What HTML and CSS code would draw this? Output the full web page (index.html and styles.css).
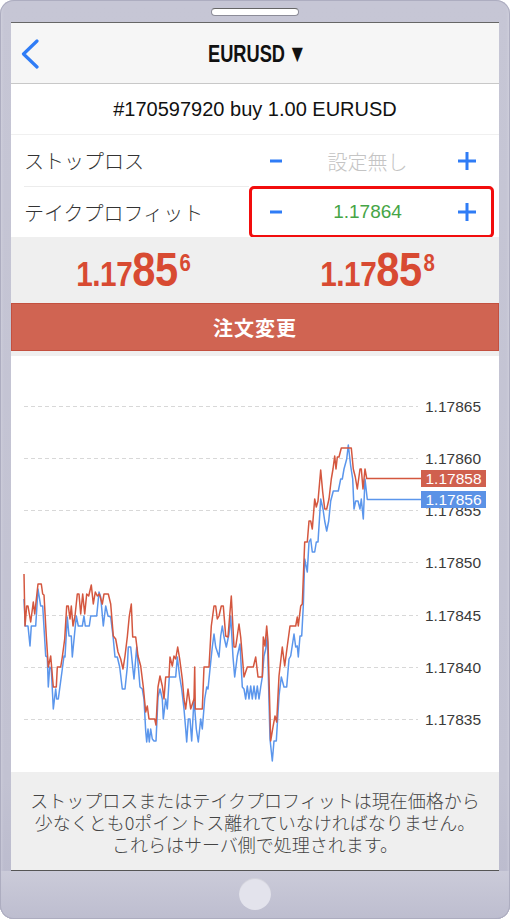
FILE: index.html
```html
<!DOCTYPE html>
<html lang="ja">
<head>
    <meta charset="UTF-8">
    <title>EURUSD 注文変更</title>
    <link rel="stylesheet" href="styles.css">
</head>
<body>

<div class="phone">
    <div class="phone-top">
        <div class="speaker"></div>
    </div>

    <div class="screen">
        <div class="nav">
            <div class="nav-back">
                <svg width="20" height="30" viewBox="0 0 20 30">
                    <polyline points="17,2 3.5,15 17,28" fill="none" stroke="#2f7cf6" stroke-width="3.2" stroke-linecap="round" stroke-linejoin="round"/>
                </svg>
            </div>
            <div class="nav-title">EURUSD<span class="caret">&#9660;</span></div>
            <div></div>
        </div>

        <div class="order-info">#170597920 buy 1.00 EURUSD</div>

        <div class="row row-first">
            <div class="row-label">ストップロス</div>
            <div class="stepper">
                <svg class="btn-minus" width="12" height="4" viewBox="0 0 12 4"><rect x="0" y="0.5" width="12" height="3" fill="#2f7cf6"/></svg>
                <span class="stepper-value empty">設定無し</span>
                <svg class="btn-plus" width="20" height="20" viewBox="0 0 20 20"><path d="M10 1v18M1 10h18" stroke="#2f7cf6" stroke-width="3" fill="none"/></svg>
            </div>
        </div>
        <div class="row">
            <div class="row-label">テイクプロフィット</div>
            <div class="stepper selected">
                <svg class="btn-minus" width="12" height="4" viewBox="0 0 12 4"><rect x="0" y="0.5" width="12" height="3" fill="#2f7cf6"/></svg>
                <span class="stepper-value">1.17864</span>
                <svg class="btn-plus" width="20" height="20" viewBox="0 0 20 20"><path d="M10 1v18M1 10h18" stroke="#2f7cf6" stroke-width="3" fill="none"/></svg>
            </div>
        </div>

        <div class="prices">
            <div class="price"><span class="price-text"><span class="p-small">1.17</span><span class="p-big">85</span><span class="p-sup">6</span></span></div>
            <div class="price"><span class="price-text"><span class="p-small">1.17</span><span class="p-big">85</span><span class="p-sup">8</span></span></div>
        </div>

        <div class="modify-btn">注文変更</div>

        <div class="chart">
            <svg width="488" height="416" viewBox="11 357 488 416">
                <g class="grid">
                    <line x1="24" y1="407.5" x2="418" y2="407.5"/>
                    <line x1="24" y1="459.5" x2="418" y2="459.5"/>
                    <line x1="24" y1="511.5" x2="418" y2="511.5"/>
                    <line x1="24" y1="563.5" x2="418" y2="563.5"/>
                    <line x1="24" y1="616.5" x2="418" y2="616.5"/>
                    <line x1="24" y1="668.5" x2="418" y2="668.5"/>
                    <line x1="24" y1="720.5" x2="418" y2="720.5"/>
                </g>
                <g class="axis">
                    <text x="425" y="413">1.17865</text>
                    <text x="425" y="465">1.17860</text>
                    <text x="425" y="517">1.17855</text>
                    <text x="425" y="569">1.17850</text>
                    <text x="425" y="622">1.17845</text>
                    <text x="425" y="674">1.17840</text>
                    <text x="425" y="726">1.17835</text>
                </g>
                <polyline class="line-bid" points="24,600 25.3,627 28,627 30,647 31.3,627 35.7,627 38,590 40.7,607 42.7,607 45.7,657 47.3,658 48.3,688 49.7,668 51.3,670 53.3,710 55.7,690 56.7,700 58.3,700 62.3,670 64,657 65,658 67.3,618 69,637 71.3,637 72.3,658 76.3,617 78.3,627 82.3,627 84,617 85.3,627 89.3,627 90.7,617 96.7,617 99,593 100.7,598 103.3,627 105.7,607 108,617 110.7,618 113,637 115,658 117.3,658 119.7,668 122.3,690 125,690 127.3,668 128.3,648 130.7,648 132.7,668 134,680 136.7,648 140,688 142.3,690 144,700 145.7,732 146.7,743 148,730 149.3,743 150.7,730 152.3,740 154,742 156,742 158,698 160,690 162.3,700 163.3,720 165.7,700 167.3,710 169.3,678 175.7,678 177.3,658 179.7,678 181.7,690 184,710 185.7,730 186.7,743 188.3,720 190,720 191.7,742 194,700 196.3,730 198.3,743 200.7,720 202.3,730 204.7,700 206.7,688 208,690 210,670 212.3,648 214,635 215.7,648 219,658 220.7,637 222.3,627 224,638 226.3,648 229,635 230.7,617 233,658 234.7,678 237.3,657 240,645 242.3,688 244,690 245.7,700 247.3,687 249,700 250.7,687 252.3,700 254,687 255.7,700 257.3,687 259,700 260.7,688 262.3,678 264,657 265.7,650 267.3,637 270,740 272.3,762 274,742 276.3,742 279,697 281.3,678 284,688 286.7,688 289,660 290.7,657 294,635 295.7,648 297.3,647 298.3,658 300,637 301.7,637 303.3,607 304.7,560 307.3,573 309,543 310.7,540 312.3,553 314.7,553 316.3,543 318,543 320.7,500 323,510 324.7,522 326.7,532 328.7,522 330.7,502 333.3,492 338.3,492 340.7,480 342.3,480 344,470 346.7,460 348.3,446 350.7,467 352.7,480 354,510 355.7,502 358,502 360,510 361.3,500 363.3,520 365,480 367.3,500.5 421,500.5"/>
                <polyline class="line-ask" points="24,575 25,627 26.7,607 28,607 30.7,623 33.3,603 34.7,615 38,585 41.3,585 42.7,595 44,596 46.3,637 48.3,668 50.7,657 53.3,688 56.3,688 57.3,668 60.7,668 62.3,658 64.7,640 66.7,607 68.3,607 70,620 71.3,607 73,627 75,617 77.3,595 79,595 80.7,615 82.7,595 84.7,615 86.7,595 88.7,597 91.3,586 93.3,605 95.3,593 97.3,597 99.3,595 102.3,605 104,595 108.3,595 110.7,605 113.3,637 115.7,640 118,653 120.7,660 123,670 125,657 127.3,638 129.3,617 131.3,605 132.7,638 135.7,638 138,657 140.7,667 143.3,688 145.7,713 147.3,707 149,720 154.7,720 156,726 158,688 160,677 162.3,687 164,700 165.7,678 169,678 170,658 172.3,667 174,657 175.7,660 177.7,648 179.7,660 182.3,680 184,700 185.7,710 188,690 190.7,710 194,700 194.7,668 195.3,710 202.3,710 204,668 209,668 211.3,627 214,607 215.7,607 217.3,620 219,617 221.3,607 223.3,607 225.7,637 228,638 231.3,597 234,648 235.7,648 239,625 240.7,638 244,678 247.3,668 253.3,668 255.7,658 258,678 262.3,678 263.3,638 265,647 266.7,627 268,643 270.7,742 273,728 275,717 276.7,723 279,677 282.3,648 284.7,667 287.3,647 290,627 295.7,627 297.3,618 298.3,627 300.7,607 302.3,605 304.7,543 307.3,543 309,522 310.7,522 312.3,530 314.7,500 316.3,508 318,502 320.7,471 322.7,493 324.7,510 326.7,510 329,500 331.3,480 333,470 334.7,457 336,470 337.3,458 339,458 341.3,449 351.3,449 353.3,470 355.3,478 357.3,490 360,470 361.3,470 363,490 365,470 366.7,479.5 421,479.5"/>
                <rect class="tag-ask" x="421" y="471" width="65" height="17"/>
                <text class="tag-text" x="453.5" y="485">1.17858</text>
                <rect class="tag-bid" x="421" y="492" width="65" height="17"/>
                <text class="tag-text" x="453.5" y="506">1.17856</text>
            </svg>
        </div>

        <div class="notice">
            <div>ストップロスまたはテイクプロフィットは現在価格から</div>
            <div>少なくとも0ポイントス離れていなければなりません。</div>
            <div>これらはサーバ側で処理されます。</div>
        </div>
    </div>

    <div class="phone-bottom">
        <div class="home-button"></div>
    </div>
</div>

</body>
</html>
```

FILE: styles.css
```css
body {
    margin: 0;
    background: white;
    font-family: "Liberation Sans", "Noto Sans CJK JP", sans-serif;
}
.phone {
    width: 510px;
    height: 919px;
    box-sizing: border-box;
    padding: 0 11px;
    display: flex;
    flex-direction: column;
    background: linear-gradient(to bottom, #c6c6d5, #c2c2d2 85%, #b9b9cc);
    border-radius: 14px;
    box-shadow: inset 0 0 0 1px #adadc0, inset 0 -3px 4px rgba(255,255,255,0.5);
}
.phone-top {
    height: 22px;
    display: flex;
    justify-content: center;
    align-items: flex-start;
}
.speaker {
    width: 86px;
    height: 6px;
    margin-top: 8px;
    background: #fff;
    border: 1px solid #8c8c98;
    border-top-color: #666;
    border-radius: 4px;
}
.screen {
    height: 847px;
    display: flex;
    flex-direction: column;
    background: white;
    border-top: 1px solid #666;
    border-bottom: 1px solid #555;
}
.phone-bottom {
    flex: 1;
    display: flex;
    justify-content: center;
    align-items: center;
    background: linear-gradient(to bottom, #cbcbd9, #bdbdcf);
    margin: 0 -11px;
    padding-bottom: 2px;
    border-radius: 0 0 14px 14px;
    box-shadow: inset 1px 0 0 #adadc0, inset -1px 0 0 #adadc0, inset 0 -1px 0 #adadc0;
}
.home-button {
    width: 32px;
    height: 32px;
    border-radius: 50%;
    background: #e3e3ec;
    box-shadow: inset 0 1px 1px rgba(0,0,0,0.08);
}

/* nav bar */
.nav {
    height: 60px;
    flex-shrink: 0;
    display: grid;
    grid-template-columns: 1fr auto 1fr;
    align-items: center;
    background: #f6f6f6;
    border-bottom: 1px solid #c8c8c8;
}
.nav-back {
    padding-left: 9px;
    padding-top: 2px;
    display: flex;
}
.nav-title {
    font-family: "Liberation Sans", sans-serif;
    font-weight: bold;
    font-size: 24px;
    color: #111;
    transform: scaleX(0.76);
    padding-top: 1px;
}
.caret {
    font-family: "DejaVu Sans", sans-serif;
    font-size: 19px;
    position: relative;
    top: -2px;
    margin-left: 9px;
}

.order-info {
    height: 50px;
    flex-shrink: 0;
    display: flex;
    justify-content: center;
    align-items: center;
    font-size: 20px;
    color: #111;
    border-bottom: 1px solid #f0f0f0;
}

/* stop loss / take profit rows */
.row {
    height: 51px;
    flex-shrink: 0;
    display: flex;
    align-items: center;
}
.row-first {
    height: 52px;
}
.row-first .row-label {
    border-bottom: 1px solid #ececec;
    height: 51px;
}
.row-first .stepper {
    height: 52px;
}
.row-label {
    flex: 1;
    margin-left: 13px;
    display: flex;
    align-items: center;
    height: 100%;
    font-family: "Noto Sans CJK JP", sans-serif;
    font-weight: 300;
    font-size: 20px;
    color: #333;
}
.stepper {
    width: 245px;
    height: 51px;
    margin-right: 5px;
    box-sizing: border-box;
    display: flex;
    align-items: center;
    justify-content: space-between;
    padding: 0 17px 0 21px;
}
.stepper.selected {
    border: 3px solid #f20d0d;
    border-radius: 5px;
    margin-top: -1px;
    height: 52px;
    padding: 0 14px 0 18px;
}
.stepper-value {
    font-size: 19px;
    color: #46a546;
    padding-right: 4px;
}
.stepper-value.empty {
    font-family: "Noto Sans CJK JP", sans-serif;
    font-weight: 300;
    font-size: 20px;
    color: #c4c4c4;
}

/* prices */
.prices {
    height: 66px;
    flex-shrink: 0;
    display: flex;
    background: #efefef;
    margin-top: -1px;
}
.price {
    flex: 1;
    display: flex;
    justify-content: center;
    align-items: center;
    padding-top: 6px;
}
.price-text {
    display: inline-flex;
    align-items: baseline;
    font-family: "Liberation Sans", sans-serif;
    font-weight: bold;
    color: #d84a32;
    line-height: 56px;
    transform: scaleX(0.85);
}
.p-small {
    font-size: 35px;
    letter-spacing: -0.5px;
}
.p-big {
    font-size: 49px;
    letter-spacing: -0.5px;
}
.p-sup {
    font-size: 24px;
    position: relative;
    top: -15px;
    margin-left: 2px;
}

.modify-btn {
    height: 48px;
    flex-shrink: 0;
    box-sizing: border-box;
    display: flex;
    justify-content: center;
    align-items: center;
    background: #d06452;
    border: 1px solid #c3503f;
    color: white;
    font-family: "Noto Sans CJK JP", sans-serif;
    font-weight: bold;
    font-size: 20px;
    letter-spacing: 1px;
}

/* chart */
.chart {
    height: 416px;
    flex-shrink: 0;
    border-top: 5px solid #efefef;
    display: flex;
}
.chart svg {
    display: block;
}
.grid line {
    stroke: #d8d8d8;
    stroke-width: 1;
    stroke-dasharray: 4 3;
}
.axis text {
    font-family: "Liberation Sans", sans-serif;
    font-size: 15.5px;
    fill: #3a3a3a;
}
.line-ask, .line-bid {
    fill: none;
    stroke-width: 1.5;
    stroke-linejoin: round;
}
.line-ask {
    stroke: #d4573f;
}
.line-bid {
    stroke: #5b96ec;
}
.tag-ask {
    fill: #d0604e;
}
.tag-bid {
    fill: #5b92e6;
}
.tag-text {
    font-family: "Liberation Sans", sans-serif;
    font-size: 15.5px;
    fill: white;
    text-anchor: middle;
}

.notice {
    flex: 1;
    background: #efefef;
    text-align: center;
    font-family: "Noto Sans CJK JP", sans-serif;
    font-weight: 300;
    font-size: 18px;
    line-height: 22px;
    color: #444;
    padding-top: 17px;
}
```
